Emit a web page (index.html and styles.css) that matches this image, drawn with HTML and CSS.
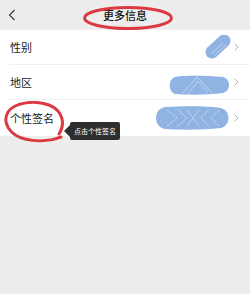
FILE: index.html
```html
<!DOCTYPE html>
<html lang="zh">
<head>
<meta charset="utf-8">
<link rel="stylesheet" href="styles.css">
</head>
<body>
<div class="page">
  <header class="bar">
    <svg class="back" width="8" height="12" viewBox="0 0 8 12"><path d="M6.5 1 L1.5 6 L6.5 11" fill="none" stroke="#333" stroke-width="1.1"/></svg>
    <h1 class="title">更多信息</h1>
    <svg class="ring ring-title" width="92" height="26" viewBox="0 0 92 26"><ellipse cx="46" cy="13" rx="43.5" ry="10.5" fill="none" stroke="#dc3a42" stroke-width="3"/></svg>
  </header>
  <ul class="list">
    <li class="row">
      <span class="label">性别</span>
      <span class="val">
        <svg width="26" height="24" viewBox="0 0 26 24"><path d="M7 17 L19 6" stroke="#8fb3e2" stroke-width="13" stroke-linecap="round"/><path d="M6 19 L18 8 M10 20 L21 10" stroke="#c9d7ee" stroke-width="0.8"/></svg>
      </span>
      <svg class="chev" width="5" height="8" viewBox="0 0 5 8"><path d="M0.6 0.6 L4 4 L0.6 7.4" fill="none" stroke="#b3b3b3" stroke-width="1"/></svg>
    </li>
    <li class="row">
      <span class="label">地区</span>
      <span class="val">
        <svg class="blob2" width="63" height="20" viewBox="0 0 63 20"><path d="M7 2 C20 0 40 1 55 2 C63 4 63 16 55 18 C40 20 20 20 7 19 C0 17 0 4 7 2 Z" fill="#8fb3e2"/><path d="M14 19 L29 2 L44 18 M20 19 L30 6 L40 18" fill="none" stroke="#c9d7ee" stroke-width="0.9"/></svg>
      </span>
      <svg class="chev" width="5" height="8" viewBox="0 0 5 8"><path d="M0.6 0.6 L4 4 L0.6 7.4" fill="none" stroke="#b3b3b3" stroke-width="1"/></svg>
    </li>
    <li class="row last">
      <span class="label">个性签名</span>
      <span class="val">
        <svg width="78" height="24" viewBox="0 0 78 24"><path d="M12 1 C30 0 55 0 68 2 C78 5 78 19 68 22 C50 24 28 24 12 23 C0 21 0 3 12 1 Z" fill="#8fb3e2"/><path d="M14 20 L24 12 L14 4 M24 21 L34 12 L24 3 M34 20 L40 12 L34 4 M46 4 L40 12 L46 20 M56 3 L48 12 L56 21 M66 4 L58 12 L66 20" fill="none" stroke="#c9d7ee" stroke-width="0.8"/></svg>
      </span>
      <svg class="chev" width="5" height="8" viewBox="0 0 5 8"><path d="M0.6 0.6 L4 4 L0.6 7.4" fill="none" stroke="#b3b3b3" stroke-width="1"/></svg>
    </li>
  </ul>
  <svg class="ring ring-sign" width="62" height="42" viewBox="0 0 62 42"><path d="M56 33 C62 24 61 10 46 4 C32 -1 12 1 5 11 C-1 21 6 34 22 38 C34 41 48 40 58 36" fill="none" stroke="#dc3a42" stroke-width="3" stroke-linecap="round"/></svg>
  <div class="tip">点击个性签名</div>
</div>
</body>
</html>
```

FILE: styles.css
```css
* { box-sizing: border-box; }
html, body {
  margin: 0;
  padding: 0;
  background: #ededed;
  font-family: "Noto Sans CJK SC", "Noto Sans", sans-serif;
  color: #1a1a1a;
}
.page {
  position: relative;
  width: 250px;
  height: 294px;
}
.bar {
  position: relative;
  height: 30px;
  display: flex;
  align-items: center;
  justify-content: center;
}
.back {
  position: absolute;
  left: 8px;
  top: 9px;
}
.title {
  margin: 0;
  font-size: 11px;
  font-weight: 500;
  line-height: 30px;
  color: #111;
}
.ring {
  position: absolute;
}
.ring-title {
  left: 82px;
  top: 5px;
}
.list {
  list-style: none;
  margin: 0;
  padding: 0 0 0 9px;
  background: #fff;
}
.row {
  display: flex;
  align-items: center;
  height: 35px;
  padding-right: 11px;
  border-bottom: 1px solid #efefef;
}
.row.last {
  height: 36px;
  border-bottom: none;
}
.label {
  padding-left: 1px;
  font-size: 11px;
  color: #1a1a1a;
}
.val {
  margin-left: auto;
  display: flex;
  align-items: center;
}
.val svg { display: block; }
.blob2 { margin-top: 5px; }
.chev {
  display: block;
  margin-left: 3px;
}
.ring-sign {
  left: 3px;
  top: 101px;
}
.tip {
  position: absolute;
  left: 70px;
  top: 122px;
  width: 50px;
  height: 18px;
  background: #2e2e2e;
  border-radius: 2px;
  color: #fff;
  font-size: 7px;
  line-height: 18px;
  text-align: center;
}
.tip::before {
  content: "";
  position: absolute;
  left: -6px;
  top: 3px;
  border-top: 6px solid transparent;
  border-bottom: 6px solid transparent;
  border-right: 6px solid #2e2e2e;
}
```
